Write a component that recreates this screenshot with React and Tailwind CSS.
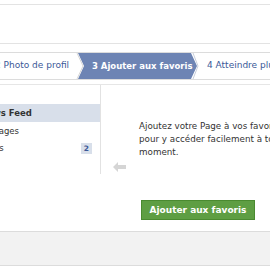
export default function App() {
  const font = { fontFamily: '"DejaVu Sans", "Liberation Sans", sans-serif' };
  return (
    <div className="w-[270px] h-[270px] overflow-hidden bg-white relative" style={font}>
      {/* top header strip */}
      <div className="h-[4px]" />
      <div className="h-[40px] border-t border-b border-[#e3e3e3]" />
      <div className="h-[8px]" />

      {/* steps */}
      <div className="relative h-[28px] border-t border-b border-[#dcdcdc] flex items-center text-[8.5px] text-[#3b5998] whitespace-nowrap">
        <span className="ml-[-5px] text-[9px]">2 Photo de profil</span>
        <div className="absolute left-[78px] top-0 h-full w-[119px] bg-[#6d84b4] text-white font-bold flex items-center pl-[14px] [clip-path:polygon(0_0,113px_0,119px_50%,113px_100%,0_100%,6px_50%)]">
          3 Ajouter aux favoris
        </div>
        <svg className="absolute left-[76px] top-0" width="10" height="26" viewBox="0 0 10 26">
          <polyline points="1,0 7,13 1,26" fill="none" stroke="#d6d6d6" strokeWidth="1" />
        </svg>
        <svg className="absolute left-[192px] top-0" width="10" height="26" viewBox="0 0 10 26">
          <polyline points="1,0 6,13 1,26" fill="none" stroke="#c9cfdc" strokeWidth="1" />
        </svg>
        <span className="absolute left-[207px] text-[9px]">4 Atteindre plus de personnes</span>
      </div>

      <div className="h-[5px] border-b border-[#e6e6e6]" />

      {/* content */}
      <div className="flex h-[146px]">
        <div className="w-[101px] shrink-0 h-[89px] border-r border-[#e2e2e2] pt-[19px] text-[8.5px] text-[#333] whitespace-nowrap">
          <div className="h-[18px] bg-[#d8dfea] flex items-center font-bold">
            <span className="ml-[-20px]">News Feed</span>
          </div>
          <div className="h-[18px] flex items-center">
            <span className="ml-[-6px]">Pages</span>
          </div>
          <div className="h-[17px] flex items-center justify-between pr-[8px]">
            <span className="ml-[-38px]">Messages</span>
            <span className="bg-[#d8dfea] text-[#3b5998] font-bold text-[7.5px] px-[3px] h-[11px] leading-[11px]">2</span>
          </div>
        </div>

        <div className="flex-1 relative">
          <svg className="absolute left-[12px] top-[77px]" width="14" height="10" viewBox="0 0 14 10">
            <path d="M0 5 L5 0 L5 3 L13 3 L13 7 L5 7 L5 10 Z" fill="#d5d5d5" />
          </svg>
          <div className="pl-[38px] pt-[35px] text-[8.75px] leading-[13px] text-[#333] whitespace-nowrap">
            <p>Ajoutez votre Page à vos favoris</p>
            <p>pour y accéder facilement à tout</p>
            <p>moment.</p>
          </div>
          <button className="absolute left-[40px] top-[115px] w-[114px] h-[20px] bg-[#5e9e43] border border-[#4a8a30] text-white font-bold text-[9px] leading-none">
            Ajouter aux favoris
          </button>
        </div>
      </div>

      {/* footer */}
      <div className="h-[35px] bg-[#f2f2f2] border-t border-b border-[#dcdcdc]" />
    </div>
  );
}
